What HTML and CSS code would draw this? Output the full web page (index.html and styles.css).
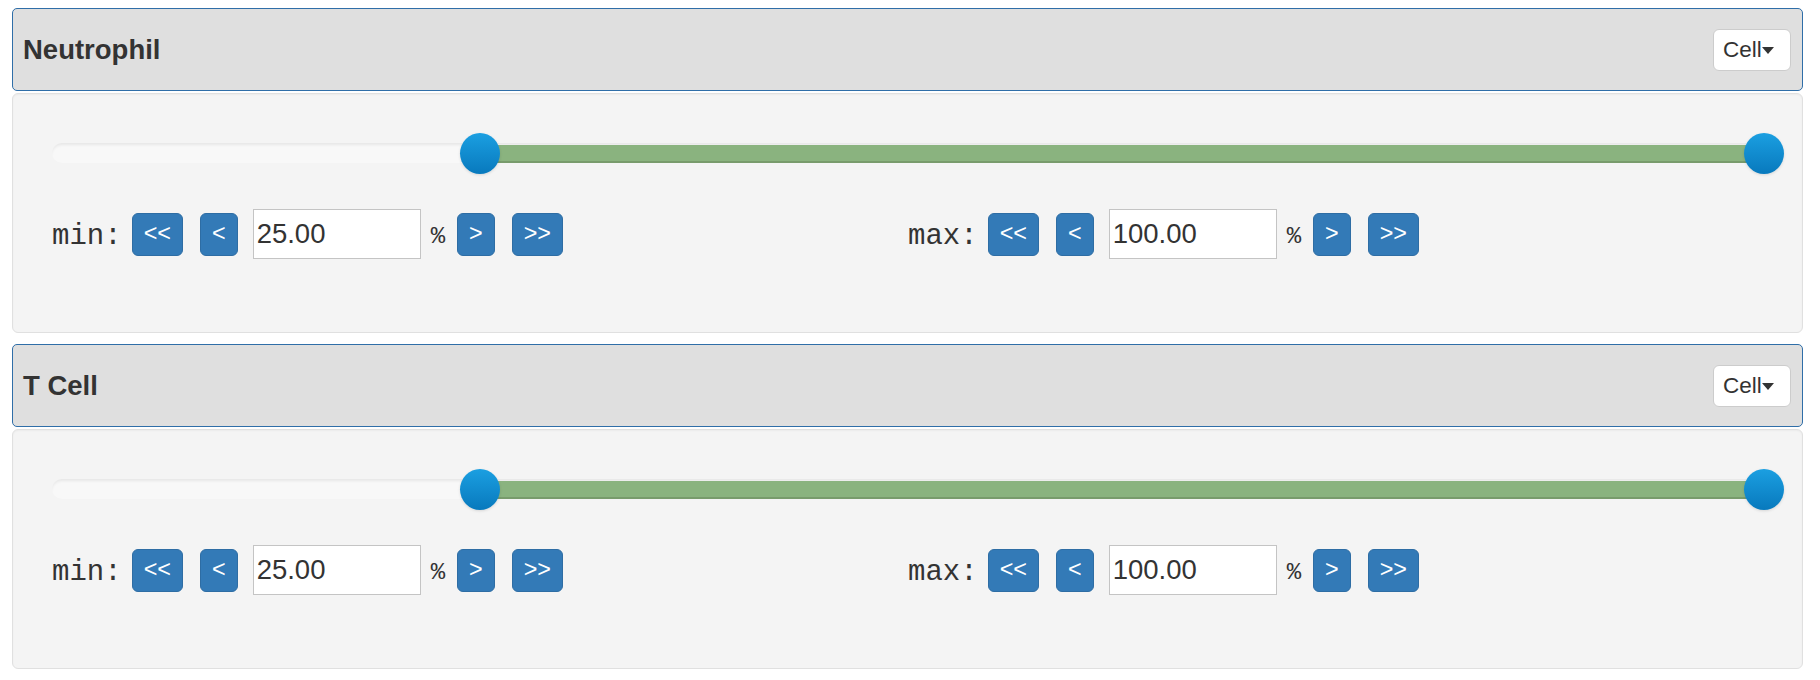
FILE: index.html
```html
<!DOCTYPE html>
<html>
<head>
<meta charset="utf-8">
<link rel="stylesheet" href="styles.css">
</head>
<body>
<div class="page">
  <section class="filter">
    <div class="filter-head">
      <span class="filter-title">Neutrophil</span>
      <button class="unit-btn">Cell<span class="caret"></span></button>
    </div>
    <div class="filter-body">
      <div class="slider">
        <div class="range" style="left:25%;right:0%"></div>
        <div class="handle" style="left:25%"></div>
        <div class="handle" style="left:100%"></div>
      </div>
      <div class="controls">
        <div class="ctl">
          <span class="lbl">min:</span>
          <button class="step wide">&lt;&lt;</button>
          <button class="step">&lt;</button>
          <input class="val" type="text" value="25.00">
          <span class="pct">%</span>
          <button class="step">&gt;</button>
          <button class="step wide">&gt;&gt;</button>
        </div>
        <div class="ctl">
          <span class="lbl">max:</span>
          <button class="step wide">&lt;&lt;</button>
          <button class="step">&lt;</button>
          <input class="val" type="text" value="100.00">
          <span class="pct">%</span>
          <button class="step">&gt;</button>
          <button class="step wide">&gt;&gt;</button>
        </div>
      </div>
    </div>
  </section>
  <section class="filter">
    <div class="filter-head">
      <span class="filter-title">T Cell</span>
      <button class="unit-btn">Cell<span class="caret"></span></button>
    </div>
    <div class="filter-body">
      <div class="slider">
        <div class="range" style="left:25%;right:0%"></div>
        <div class="handle" style="left:25%"></div>
        <div class="handle" style="left:100%"></div>
      </div>
      <div class="controls">
        <div class="ctl">
          <span class="lbl">min:</span>
          <button class="step wide">&lt;&lt;</button>
          <button class="step">&lt;</button>
          <input class="val" type="text" value="25.00">
          <span class="pct">%</span>
          <button class="step">&gt;</button>
          <button class="step wide">&gt;&gt;</button>
        </div>
        <div class="ctl">
          <span class="lbl">max:</span>
          <button class="step wide">&lt;&lt;</button>
          <button class="step">&lt;</button>
          <input class="val" type="text" value="100.00">
          <span class="pct">%</span>
          <button class="step">&gt;</button>
          <button class="step wide">&gt;&gt;</button>
        </div>
      </div>
    </div>
  </section>
</div>
</body>
</html>
```
FILE: styles.css
```css
* { box-sizing: border-box; }
html, body { margin: 0; padding: 0; background: #fff; }
body { font-family: "Liberation Sans", Arial, sans-serif; color: #333; }

.page {
  padding: 8px 17px 0 12px;
  display: flex;
  flex-direction: column;
  gap: 11px;
}

.filter { display: flex; flex-direction: column; gap: 2px; }

.filter-head {
  height: 83px;
  background: #dfdfdf;
  border: 1px solid #2f6ea8;
  border-radius: 5px;
  display: flex;
  align-items: center;
  justify-content: space-between;
  padding: 0 11px 0 10px;
}

.filter-title {
  font-size: 27.5px;
  font-weight: bold;
  color: #333;
}

.unit-btn {
  height: 42px;
  width: 78px;
  background: #fff;
  border: 1px solid #ccc;
  border-radius: 6px;
  font-family: "Liberation Sans", Arial, sans-serif;
  font-size: 22.5px;
  color: #333;
  padding: 0 0 0 9px;
  display: flex;
  align-items: center;
}

.caret {
  display: inline-block;
  width: 0;
  height: 0;
  border-top: 7px solid #333;
  border-left: 6.5px solid transparent;
  border-right: 6.5px solid transparent;
  margin-top: 2px;
}

.filter-body {
  height: 240px;
  background: #f4f4f4;
  border: 1px solid #e0e0e0;
  border-radius: 6px;
  box-shadow: inset 0 1px 2px rgba(0,0,0,0.04);
  padding: 49px 38px 0 39px;
}

.slider {
  position: relative;
  height: 20px;
  border-radius: 10px;
  background: #f8f8f8;
  box-shadow: inset 0 3px 3px -1px rgba(0,0,0,0.07);
}

.range {
  position: absolute;
  top: 2px;
  bottom: 0;
  background: #8ab37f;
  border-bottom: 2px solid #789b6c;
}

.handle {
  position: absolute;
  top: -10px;
  width: 40px;
  height: 41px;
  margin-left: -20px;
  border-radius: 50%;
  background: linear-gradient(#1b9fe1, #0879bd);
  box-shadow: 0 1px 3px rgba(0,0,0,0.12);
}

.controls {
  margin-top: 46px;
  display: grid;
  grid-template-columns: 1fr 1fr;
}

.ctl {
  display: flex;
  align-items: center;
  height: 50px;
}

.lbl, .pct {
  font-family: "Liberation Mono", "Courier New", monospace;
  color: #333;
}

.lbl { font-size: 29px; margin-right: 10px; position: relative; top: 2px; }

.pct { font-size: 24px; margin: 0 12px 0 10px; position: relative; top: 2px; }

.step {
  height: 43px;
  padding: 0 11px;
  background: #337ab7;
  border: 1px solid #2e6da4;
  border-radius: 6px;
  color: #fff;
  font-family: "Liberation Sans", Arial, sans-serif;
  font-size: 23.4px;
  line-height: 1;
}

.step + .step { margin-left: 17px; }
.step + .val { margin-left: 15px; }

.val {
  width: 168px;
  height: 50px;
  border: 1px solid #c4c4c4;
  background: #fff;
  padding: 0 3px;
  font-family: "Liberation Sans", Arial, sans-serif;
  font-size: 27.5px;
  color: #333;
  border-radius: 0;
  outline: none;
}
```
